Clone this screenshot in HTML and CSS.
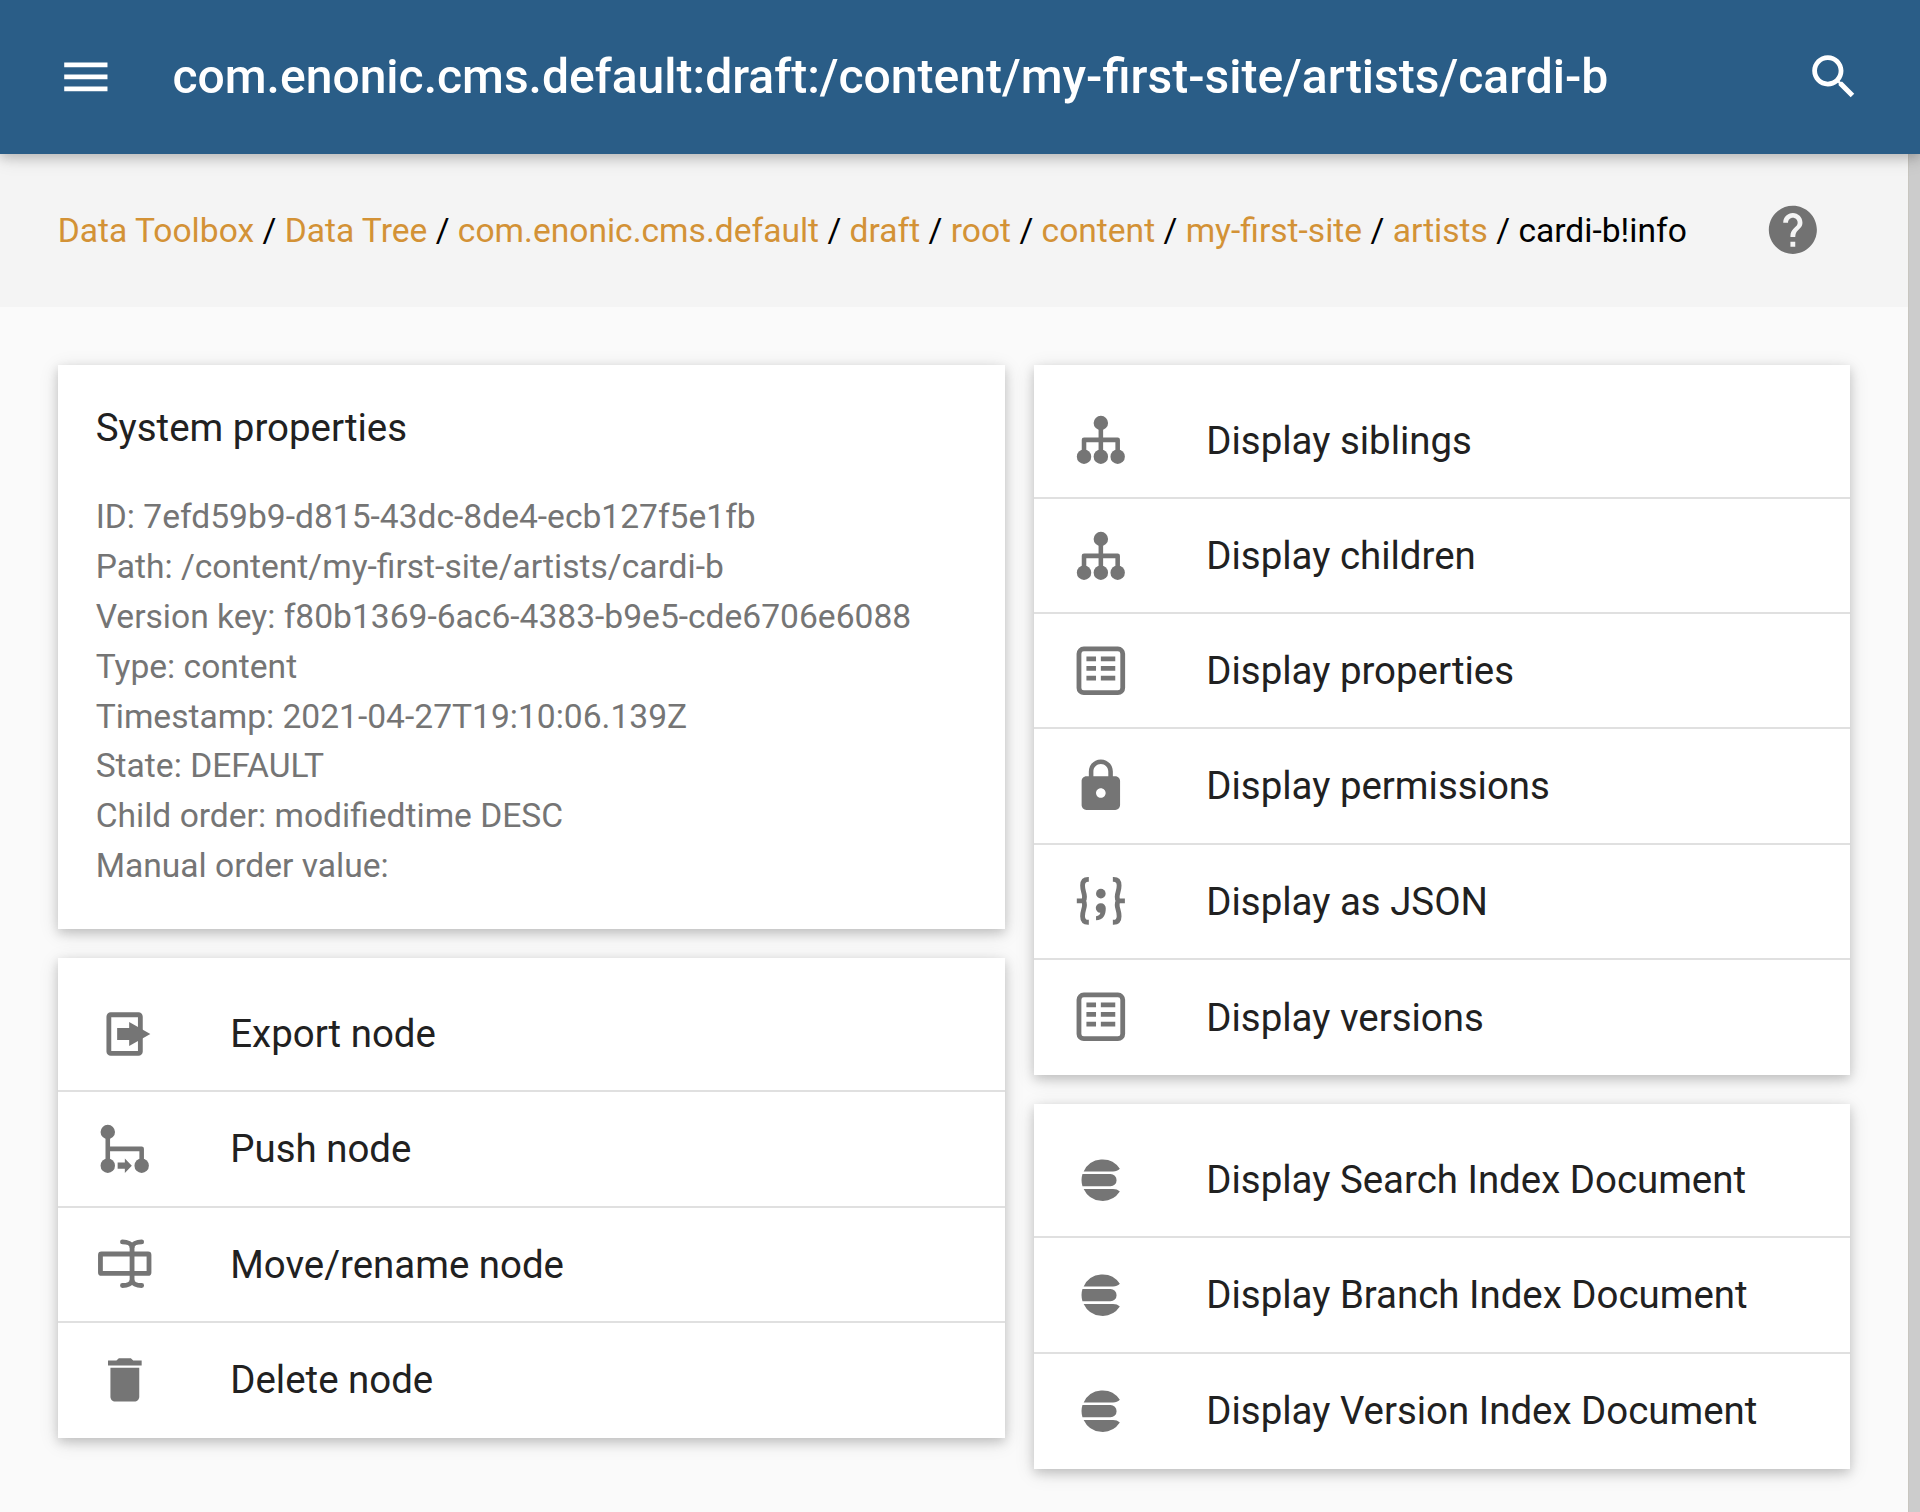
FILE: index.html
```html
<!DOCTYPE html>
<html lang="en">
<head>
<meta charset="utf-8">
<title>Data Toolbox</title>
<link rel="stylesheet" href="styles.css">
</head>
<body>
<svg class="sprite" aria-hidden="true">
  <symbol id="tree" viewBox="0 0 24 24">
    <path d="M12 5v14M5 19v-7h14v7" fill="none" stroke="currentColor" stroke-width="1.9" stroke-linejoin="round"/>
    <circle cx="12" cy="5" r="3"/><circle cx="5" cy="19" r="3"/><circle cx="12" cy="19" r="3"/><circle cx="19" cy="19" r="3"/>
  </symbol>
  <symbol id="list" viewBox="0 0 24 24">
    <rect x="2.9" y="2.9" width="18.2" height="18.2" rx="2" fill="none" stroke="currentColor" stroke-width="2"/>
    <path d="M6 6h4v2H6zM12 6h6v2h-6zM6 10h4v2H6zM12 10h6v2h-6zM6 14h4v2H6zM12 14h6v2h-6z"/>
  </symbol>
  <symbol id="lock" viewBox="0 0 24 24">
    <path d="M18 8h-1V6c0-2.76-2.24-5-5-5S7 3.24 7 6v2H6c-1.1 0-2 .9-2 2v10c0 1.1.9 2 2 2h12c1.1 0 2-.9 2-2V10c0-1.1-.9-2-2-2zm-6 9c-1.1 0-2-.9-2-2s.9-2 2-2 2 .9 2 2-.9 2-2 2zm3.1-9H8.9V6c0-1.71 1.39-3.1 3.1-3.1 1.71 0 3.1 1.39 3.1 3.1v2z"/>
  </symbol>
  <symbol id="json" viewBox="0 0 24 24">
    <path d="M7 3.1H6.7C5.2 3.1 4.4 4 4.4 5.6C4.4 8 5.2 8.7 5.2 10.3C5.2 11.3 4.9 12 4.3 12C4.9 12 5.2 12.7 5.2 13.7C5.2 15.3 4.4 16 4.4 18.4C4.4 20 5.2 20.9 6.7 20.9H7M2 12h3M17 3.1h.3C18.8 3.1 19.6 4 19.6 5.6C19.6 8 18.8 8.7 18.8 10.3C18.8 11.3 19.1 12 19.7 12C19.1 12 18.8 12.7 18.8 13.7C18.8 15.3 19.6 16 19.6 18.4C19.6 20 18.8 20.9 17.3 20.9H17M22 12h-3" fill="none" stroke="currentColor" stroke-width="2"/>
    <circle cx="12" cy="9" r="2"/>
    <path d="M12 13a2 2 0 0 1 2.05 2.1C14.05 18 13 20 10 20.1V18.4C11.1 18.3 11.7 17.8 11.8 17A2 2 0 0 1 12 13z"/>
  </symbol>
  <symbol id="export" viewBox="0 0 24 24">
    <rect x="5.35" y="4.05" width="13.1" height="16.1" rx=".8" fill="none" stroke="currentColor" stroke-width="2"/>
    <path d="M8.8 9.6h5V7.1l8.8 5-8.8 5v-2.5h-5z"/>
  </symbol>
  <symbol id="push" viewBox="0 0 24 24">
    <path d="M4.9 5v14M4.9 12H19v7" fill="none" stroke="currentColor" stroke-width="1.9" stroke-linejoin="round"/>
    <circle cx="4.9" cy="5" r="3"/><circle cx="4.9" cy="19" r="3"/><circle cx="19" cy="19" r="3"/>
    <path d="M9 17.7h3V16l2.9 3-2.9 3v-1.7H9z"/>
  </symbol>
  <symbol id="rename" viewBox="0 0 24 24">
    <g fill="none" stroke="currentColor" stroke-width="2">
      <rect x="1.85" y="7.9" width="20.2" height="8.1" rx=".4"/>
      <path d="M15 5v14"/>
      <path d="M11 2.9C13 2.9 15 3.6 15 5.3C15 3.6 17 2.9 19 2.9M11 21C13 21 15 20.3 15 18.6C15 20.3 17 21 19 21" stroke-linecap="round"/>
    </g>
  </symbol>
  <symbol id="delete" viewBox="0 0 24 24">
    <path d="M6 19c0 1.1.9 2 2 2h8c1.1 0 2-.9 2-2V7H6v12zM19 4h-3.5l-1-1h-5l-1 1H5v2h14V4z"/>
  </symbol>
  <symbol id="elastic" viewBox="0 0 24 24">
    <path d="M4.85 8.5A8.67 8.67 0 0 1 19.9 7.35C19.1 8.1 18.3 8.5 17.1 8.5zM4.35 9.6H16a2.55 2.55 0 0 1 0 5.1H4.35A8.67 8.67 0 0 1 4.35 9.6zM4.85 15.8H17.1C18.3 15.8 19.1 16.1 19.9 16.9A8.67 8.67 0 0 1 4.85 15.8z"/>
  </symbol>
</svg>

<header class="topbar">
  <svg class="icon" viewBox="0 0 24 24"><path d="M3 18h18v-2H3v2zm0-5h18v-2H3v2zm0-7v2h18V6H3z"/></svg>
  <h1 class="title">com.enonic.cms.default:draft:/content/my-first-site/artists/cardi-b</h1>
  <svg class="icon" viewBox="0 0 24 24"><path d="M15.5 14h-.79l-.28-.27C15.41 12.59 16 11.11 16 9.5 16 5.91 13.09 3 9.5 3S3 5.91 3 9.5 5.91 16 9.5 16c1.61 0 3.09-.59 4.23-1.57l.27.28v.79l5 4.99L20.49 19l-4.99-5zm-6 0C7.01 14 5 11.99 5 9.5S7.01 5 9.5 5 14 7.01 14 9.5 11.99 14 9.5 14z"/></svg>
</header>

<div class="viewport">
  <div class="page">
    <nav class="crumbs">
      <p class="trail"><a>Data Toolbox</a> / <a>Data Tree</a> / <a>com.enonic.cms.default</a> / <a>draft</a> / <a>root</a> / <a>content</a> / <a>my-first-site</a> / <a>artists</a> / cardi-b!info</p>
      <svg class="icon help" viewBox="0 0 24 24"><path d="M12 2C6.48 2 2 6.48 2 12s4.48 10 10 10 10-4.48 10-10S17.52 2 12 2zm1 17h-2v-2h2v2zm2.07-7.75l-.9.92C13.45 12.9 13 13.5 13 15h-2v-.5c0-1.1.45-2.1 1.17-2.83l1.24-1.26c.37-.36.59-.86.59-1.41 0-1.1-.9-2-2-2s-2 .9-2 2H8c0-2.21 1.79-4 4-4s4 1.79 4 4c0 .88-.36 1.68-.93 2.25z"/></svg>
    </nav>
    <main class="columns">
      <div class="column column-left">
        <section class="card info">
          <h2 class="info-title">System properties</h2>
          <ul class="info-lines">
            <li>ID: 7efd59b9-d815-43dc-8de4-ecb127f5e1fb</li>
            <li>Path: /content/my-first-site/artists/cardi-b</li>
            <li>Version key: f80b1369-6ac6-4383-b9e5-cde6706e6088</li>
            <li>Type: content</li>
            <li>Timestamp: 2021-04-27T19:10:06.139Z</li>
            <li>State: DEFAULT</li>
            <li>Child order: modifiedtime DESC</li>
            <li>Manual order value:</li>
          </ul>
        </section>
        <section class="card menu">
          <a class="row"><svg class="icon"><use href="#export"/></svg>Export node</a>
          <a class="row"><svg class="icon"><use href="#push"/></svg>Push node</a>
          <a class="row"><svg class="icon"><use href="#rename"/></svg>Move/rename node</a>
          <a class="row"><svg class="icon"><use href="#delete"/></svg>Delete node</a>
        </section>
      </div>
      <div class="column column-right">
        <section class="card menu">
          <a class="row"><svg class="icon"><use href="#tree"/></svg>Display siblings</a>
          <a class="row"><svg class="icon"><use href="#tree"/></svg>Display children</a>
          <a class="row"><svg class="icon"><use href="#list"/></svg>Display properties</a>
          <a class="row"><svg class="icon"><use href="#lock"/></svg>Display permissions</a>
          <a class="row"><svg class="icon"><use href="#json"/></svg>Display as JSON</a>
          <a class="row"><svg class="icon"><use href="#list"/></svg>Display versions</a>
        </section>
        <section class="card menu">
          <a class="row"><svg class="icon"><use href="#elastic"/></svg>Display Search Index Document</a>
          <a class="row"><svg class="icon"><use href="#elastic"/></svg>Display Branch Index Document</a>
          <a class="row"><svg class="icon"><use href="#elastic"/></svg>Display Version Index Document</a>
        </section>
      </div>
    </main>
  </div>
  <div class="scrollbar"></div>
</div>
</body>
</html>
```
FILE: styles.css
```css
* { box-sizing: border-box; margin: 0; padding: 0; }

body {
  display: flex;
  flex-direction: column;
  height: 1512px;
  overflow: hidden;
  background: #fafafa;
  color: #000;
  font-family: Roboto, "Liberation Sans", sans-serif;
  font-size: 33.6px;
}

.sprite { position: absolute; width: 0; height: 0; }

.icon {
  flex: none;
  width: 57.7px;
  height: 57.7px;
  fill: currentColor;
}

.topbar {
  position: relative;
  z-index: 1;
  flex: none;
  display: flex;
  align-items: center;
  height: 154px;
  padding: .6px 57.6px 0 56.8px;
  background: #2a5d87;
  color: #fff;
  box-shadow: 0 4px 10px rgba(0, 0, 0, .16), 0 4px 19px rgba(0, 0, 0, .12);
}

.title {
  flex: 1;
  padding: 0 0 2px 58px;
  font-size: 48.03px;
  font-weight: 500;
  white-space: nowrap;
}

.viewport { flex: 1; display: flex; min-height: 0; }
.page { flex: 1; min-width: 0; }

.scrollbar {
  width: 12px;
  background: #ccc;
  border-left: 1px solid #c8c6c0;
}

.crumbs {
  display: flex;
  align-items: center;
  justify-content: space-between;
  height: 153px;
  padding: 0 86.5px .6px 57.7px;
  background: #f4f4f4;
}

.trail { white-space: nowrap; }
.trail a { color: #d39236; }
.help { color: #727272; }

.columns {
  display: flex;
  align-items: flex-start;
  gap: 29px;
  padding: 58px;
}

.column { display: flex; flex-direction: column; gap: 28.95px; }
.column-left { width: 947px; }
.column-right { width: 816px; }

.card {
  background: #fff;
  box-shadow: 0 4px 10px rgba(0, 0, 0, .16), 0 4px 19px rgba(0, 0, 0, .12);
}

.info { height: 564.4px; padding: 38.6px 37.7px 0; }
.info-title {
  margin-bottom: 40.9px;
  color: #212121;
  font-size: 38.46px;
  font-weight: 400;
  line-height: 48px;
}
.info-lines {
  color: #757575;
  line-height: 49.8px;
  list-style: none;
  white-space: nowrap;
}

.menu { padding-top: 18.6px; }
.row {
  display: flex;
  align-items: center;
  gap: 76.9px;
  height: 115.3px;
  padding: 0 0 .3px 37.7px;
  border-bottom: 2px solid #e0e0e0;
  color: #212121;
  font-size: 38.44px;
  white-space: nowrap;
}
.row:last-child { padding-bottom: 1px; border-bottom: 0; }
.row .icon { color: #757575; }
```
